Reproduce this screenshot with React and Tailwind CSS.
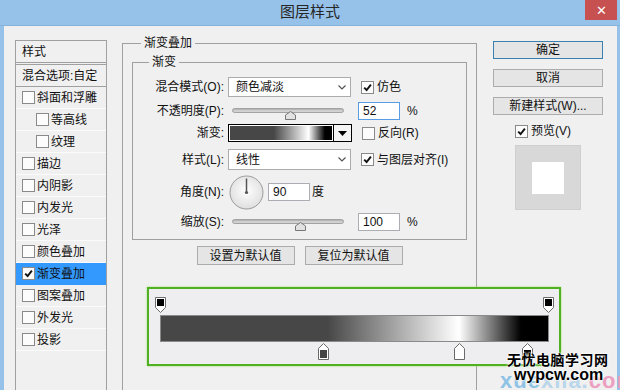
import React from "react";

const F = "font-['Liberation_Sans','Noto_Sans_CJK_SC',sans-serif]";

function Check({ checked }) {
  return (
    <span className="w-[13px] h-[13px] border border-[#8a8a8a] bg-[#fcfcfc] flex items-center justify-center shrink-0">
      {checked ? (
        <svg width="9" height="9" viewBox="0 0 9 9">
          <path d="M1.2 4.6 L3.6 7 L7.9 1.6" stroke="#111" strokeWidth="1.9" fill="none" />
        </svg>
      ) : null}
    </span>
  );
}

function ListRow({ label, checked, indent, selected }) {
  return (
    <div
      className={`h-[22px] shrink-0 flex items-center gap-[2px] border-b ${
        selected ? "bg-[#3399ff] border-[#3399ff]" : "border-[#fbfbfb]"
      } ${indent ? "pl-[20px]" : "pl-[6px]"}`}
    >
      <Check checked={checked} />
      <span className="leading-none">{label}</span>
    </div>
  );
}

function Select({ value }) {
  return (
    <div className="w-[123px] h-full border border-[#acacac] bg-white flex items-center justify-between pl-[7px] pr-[4px]">
      <span className="leading-none">{value}</span>
      <svg width="8" height="5" viewBox="0 0 8 5">
        <path d="M0.5 0.5 L4 4 L7.5 0.5" stroke="#555" strokeWidth="1.2" fill="none" />
      </svg>
    </div>
  );
}

function Row({ label, h, mt, children }) {
  return (
    <div className={`flex items-center ${h} ${mt}`}>
      <div className="w-[91px] text-right shrink-0 leading-none">{label}</div>
      <div className="ml-[4px] flex items-center h-full">{children}</div>
    </div>
  );
}

function Thumb() {
  return (
    <svg width="11" height="9" viewBox="0 0 11 9">
      <path d="M5.5 0.5 L10.5 4 L10.5 8.5 L0.5 8.5 L0.5 4 Z" fill="#e2e2e2" stroke="#777" />
    </svg>
  );
}

function Slider({ thumbClass }) {
  return (
    <div className="w-[123px] h-full relative">
      <div className="absolute left-[4px] top-[6px] w-[112px] h-[5px] rounded-full bg-[#d2d2d2] border border-[#a3a3a3] shadow-[inset_0_1px_1px_rgba(0,0,0,0.15)]" />
      <div className={`absolute top-[9px] ${thumbClass} flex`}>
        <Thumb />
      </div>
    </div>
  );
}

function Input({ value, focus }) {
  return (
    <div
      className={`w-[42px] h-[18px] border ${
        focus ? "border-[#569de5]" : "border-[#abadb3]"
      } bg-white flex items-center pl-[4px] leading-none`}
    >
      {value}
    </div>
  );
}

function CheckLabel({ checked, label }) {
  return (
    <div className="ml-[10px] flex items-center gap-[3px]">
      <Check checked={checked} />
      <span className="leading-none">{label}</span>
    </div>
  );
}

function Btn({ children, className }) {
  return (
    <div
      className={`h-[18px] border bg-[#e5e5e5] flex items-center justify-center leading-none ${className}`}
    >
      {children}
    </div>
  );
}

function TopStop() {
  return (
    <svg width="11" height="17" viewBox="0 0 11 17">
      <path d="M0.5 0.5 H10.5 V10.5 L5.5 15.5 L0.5 10.5 Z" fill="#ffffff" stroke="#6a6a6a" />
      <rect x="2" y="2" width="7" height="7" fill="#000" />
    </svg>
  );
}

function BottomStop({ fill }) {
  return (
    <svg width="11" height="17" viewBox="0 0 11 17">
      <path d="M5.5 0.5 L10.5 5.5 V16.5 H0.5 V5.5 Z" fill="#ffffff" stroke="#6a6a6a" />
      <rect x="2.5" y="7.5" width="6" height="7" fill={fill} stroke={fill === "#ffffff" ? "#ffffff" : fill} />
    </svg>
  );
}

const GRAD =
  "bg-[linear-gradient(to_right,#474747_0%,#474747_43%,#ffffff_77%,#000000_93%,#000000_100%)]";

export default function App() {
  return (
    <div className={`w-[620px] h-[390px] overflow-hidden relative bg-[#f0f0f0] text-[12px] text-[#111] ${F}`}>
      {/* title bar */}
      <div className="h-[26px] bg-[#96c2ea] flex items-start border-b border-[#86b3dc]">
        <div className="w-[35px] shrink-0" />
        <div className="flex-1 h-full flex items-center justify-center text-[15px] text-[#262626]">图层样式</div>
        <div className="w-[32px] h-[20px] mr-[3px] bg-[#c75050] flex items-center justify-center text-white text-[13px] leading-none">
          ✕
        </div>
      </div>

      {/* body */}
      <div className="h-[364px] flex items-start border-l-[4px] border-r-[3px] border-[#96c2ea] pl-[11px]">
        {/* left list */}
        <div className="mt-[14px] w-[92px] h-[360px] border border-[#a0a0a0] flex flex-col shrink-0">
          <div className="h-[22px] shrink-0 border-b border-[#a0a0a0] pl-[6px] flex items-center leading-none">样式</div>
          <div className="mt-[1px] h-[23px] shrink-0 border-t border-b border-[#a0a0a0] pl-[6px] flex items-center leading-none">
            混合选项:自定
          </div>
          <ListRow label="斜面和浮雕" />
          <ListRow label="等高线" indent />
          <ListRow label="纹理" indent />
          <ListRow label="描边" />
          <ListRow label="内阴影" />
          <ListRow label="内发光" />
          <ListRow label="光泽" />
          <ListRow label="颜色叠加" />
          <ListRow label="渐变叠加" checked selected />
          <ListRow label="图案叠加" />
          <ListRow label="外发光" />
          <ListRow label="投影" />
        </div>

        {/* middle */}
        <fieldset className="ml-[15px] mt-[9px] w-[355px] h-[400px] shrink-0 border border-[#a0a0a0] px-[9px]">
          <legend className="ml-[9px] px-[3px] leading-[16px]">渐变叠加</legend>
          <fieldset className="mt-[3px] border border-[#a0a0a0] pb-[8px]">
            <legend className="ml-[16px] px-[3px] leading-[16px]">渐变</legend>
            <Row label="混合模式(O):" h="h-[20px]" mt="mt-[7px]">
              <Select value="颜色减淡" />
              <CheckLabel checked label="仿色" />
            </Row>
            <Row label="不透明度(P):" h="h-[18px]" mt="mt-[5px]">
              <Slider thumbClass="left-[57px]" />
              <div className="ml-[7px]">
                <Input value="52" focus />
              </div>
              <span className="ml-[7px] leading-none">%</span>
            </Row>
            <Row label="渐变:" h="h-[18px]" mt="mt-[4px]">
              <div className="w-[106px] h-[18px] border border-black bg-white p-[1px]">
                <div className={`w-full h-full ${GRAD}`} />
              </div>
              <div className="w-[18px] h-[18px] border border-black border-l-0 bg-[#f4f4f4] flex items-center justify-center">
                <svg width="9" height="5" viewBox="0 0 9 5">
                  <path d="M0 0 H9 L4.5 5 Z" fill="#000" />
                </svg>
              </div>
              <CheckLabel label="反向(R)" />
            </Row>
            <Row label="样式(L):" h="h-[21px]" mt="mt-[7px]">
              <Select value="线性" />
              <CheckLabel checked label="与图层对齐(I)" />
            </Row>
            <Row label="角度(N):" h="h-[34px]" mt="mt-[5px]">
              <div className="ml-[1px] flex">
                <svg width="35" height="35" viewBox="0 0 35 35">
                  <defs>
                    <radialGradient id="dg" cx="50%" cy="45%" r="60%">
                      <stop offset="0%" stopColor="#ffffff" />
                      <stop offset="100%" stopColor="#dcdcdc" />
                    </radialGradient>
                  </defs>
                  <circle cx="17.5" cy="17.5" r="16.5" fill="url(#dg)" stroke="#9b9b9b" />
                  <line x1="17.5" y1="3.5" x2="17.5" y2="17.5" stroke="#555" strokeWidth="1.5" />
                  <circle cx="17.5" cy="17.5" r="1.6" fill="#555" />
                </svg>
              </div>
              <div className="ml-[4px]">
                <Input value="90" />
              </div>
              <span className="ml-[2px] leading-none">度</span>
            </Row>
            <Row label="缩放(S):" h="h-[18px]" mt="mt-[4px]">
              <Slider thumbClass="left-[67px]" />
              <div className="ml-[7px]">
                <Input value="100" />
              </div>
              <span className="ml-[7px] leading-none">%</span>
            </Row>
          </fieldset>
          <div className="mt-[6px] flex justify-center gap-[10px]">
            <Btn className="w-[98px] h-[19px] border-[#acacac]">设置为默认值</Btn>
            <Btn className="w-[98px] h-[19px] border-[#acacac]">复位为默认值</Btn>
          </div>
        </fieldset>

        {/* right */}
        <div className="ml-[16px] mt-[15px] w-[110px] flex flex-col shrink-0">
          <Btn className="border-[#3c7fb1]">确定</Btn>
          <Btn className="mt-[10px] border-[#acacac]">取消</Btn>
          <Btn className="mt-[10px] border-[#acacac]">新建样式(W)...</Btn>
          <div className="mt-[8px] h-[16px] pl-[22px] flex items-center gap-[3px]">
            <Check checked />
            <span className="leading-none">预览(V)</span>
          </div>
          <div className="mt-[6px] mx-auto w-[66px] h-[65px] bg-[#d8d8d8] border border-[#cfcfcf] flex items-center justify-center">
            <div className="w-[32px] h-[32px] bg-white" />
          </div>
        </div>
      </div>

      {/* gradient editor (highlighted) */}
      <div className="absolute left-[147px] top-[287px] w-[414px] h-[79px] border-[2px] border-[#4fb021] shadow-[0_0_2px_#9bdc6e] bg-[#eeeef0] pl-[11px] pt-[8px]">
        <div className="relative w-[389px] h-[17px]">
          <div className="absolute left-[-5px] top-0 flex">
            <TopStop />
          </div>
          <div className="absolute left-[383px] top-0 flex">
            <TopStop />
          </div>
        </div>
        <div className={`mt-[1px] w-[389px] h-[27px] border border-[#8a8a8a] ${GRAD}`} />
        <div className="relative w-[389px] h-[17px] mt-[1px]">
          <div className="absolute left-[158px] top-0 flex">
            <BottomStop fill="#444444" />
          </div>
          <div className="absolute left-[294px] top-0 flex">
            <BottomStop fill="#ffffff" />
          </div>
          <div className="absolute left-[362px] top-0 flex">
            <BottomStop fill="#000000" />
          </div>
        </div>
      </div>

      {/* watermark */}
      <div className="absolute left-[498px] top-[352px] w-[122px] h-[38px]">
        <div className="absolute left-[2px] top-[18px] text-[22px] font-bold leading-none tracking-[1px] font-['Liberation_Sans',sans-serif]">
          <span className="text-[#8ec3e6]">xue</span>
          <span className="text-[#b9d6ea]">xila.</span>
          <span className="text-[#ec9fc0]">com</span>
        </div>
        <div className="absolute left-[9px] top-[1px] text-[14px] font-bold leading-none text-black tracking-[0.5px] [text-shadow:0_0_2px_#fff,0_0_2px_#fff,0_0_3px_#fff]">
          无忧电脑学习网
        </div>
        <div className="absolute left-[16px] top-[15px] text-[16px] font-bold leading-none text-black font-['Liberation_Sans',sans-serif] [text-shadow:0_0_2px_#fff,0_0_2px_#fff,0_0_3px_#fff]">
          wypcw.com
        </div>
      </div>
    </div>
  );
}
